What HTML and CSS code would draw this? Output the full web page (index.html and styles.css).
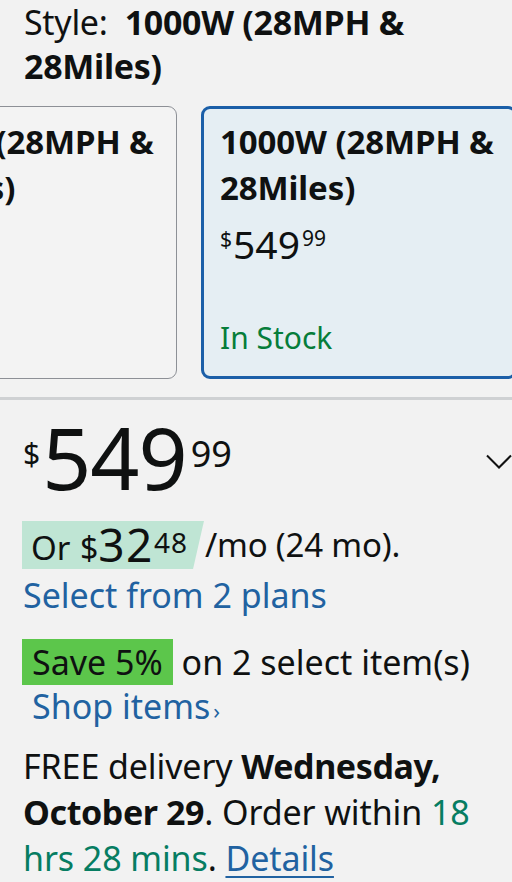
FILE: index.html
```html
<!DOCTYPE html>
<html>
<head>
<meta charset="utf-8">
<link rel="stylesheet" href="styles.css">
</head>
<body>
<div class="page">
  <div class="style-label">Style:&nbsp; <b>1000W (28MPH &amp; 28Miles)</b></div>

  <div class="cards">
    <div class="card">
      <div class="card-title">1000W (28MPH &amp; 28Miles)</div>
      <div class="card-price"><span class="cs">$</span>549<span class="cc">99</span></div>
      <div class="card-stock">In Stock</div>
    </div>
    <div class="card selected">
      <div class="card-title">1000W (28MPH &amp; 28Miles)</div>
      <div class="card-price"><span class="cs">$</span>549<span class="cc">99</span></div>
      <div class="card-stock">In Stock</div>
    </div>
  </div>

  <div class="divider"></div>

  <div class="buybox">
    <div class="price-row">
      <div class="price"><span class="ps">$</span><span class="pw">549</span><span class="pc">99</span></div>
      <svg class="chev" width="26" height="16" viewBox="0 0 26 16"><path d="M1 1.5 L13 13.5 L25 1.5" fill="none" stroke="#111" stroke-width="2"/></svg>
    </div>

    <div class="mo-row"><span class="mo-hl">Or <span class="ms">$</span><span class="mw">32</span><span class="mc">48</span></span><span class="mo-rest">/mo (24 mo).</span></div>
    <div class="link plans">Select from 2 plans</div>

    <div class="save-row"><span class="save">Save 5%</span> on 2 select item(s)</div>
    <div class="link shop">Shop items<span class="arr">›</span></div>

    <div class="delivery">FREE delivery <b>Wednesday, October 29</b>. Order within <span class="green">18 hrs 28 mins</span>. <span class="details">Details</span></div>
  </div>
</div>
</body>
</html>
```

FILE: styles.css
```css
html, body {
  margin: 0;
  padding: 0;
  background: #f2f2f2;
}
body {
  font-family: "Noto Sans", "Open Sans", sans-serif;
  color: #0f1111;
  width: 512px;
  height: 882px;
  overflow: hidden;
}
.style-label {
  font-size: 34px;
  line-height: 44px;
  padding: 0 24px;
  letter-spacing: -0.3px;
}
.style-label b {
  font-weight: 700;
}
.cards {
  display: flex;
  gap: 24px;
  margin-top: 18px;
  margin-left: -139px;
  height: 273px;
}
.card {
  flex: 0 0 316px;
  box-sizing: border-box;
  height: 273px;
  border: 1px solid #8d9096;
  border-radius: 9px;
  padding: 12px 18px 0 18px;
  display: flex;
  flex-direction: column;
  background: #f3f3f3;
}
.card.selected {
  border: 3px solid #1b5fa8;
  background: #e5eef3;
  padding: 10px 16px 0 16px;
}
.card-title {
  font-size: 33px;
  font-weight: 700;
  line-height: 46px;
  letter-spacing: -0.1px;
}
.card-price {
  font-size: 39px;
  line-height: 46px;
  margin-top: 4px;
}
.cs {
  font-size: 21px;
  vertical-align: 12px;
  margin-right: 1px;
}
.cc {
  font-size: 21px;
  vertical-align: 13px;
  margin-left: 2px;
}
.card-stock {
  margin-top: auto;
  margin-bottom: 18px;
  font-size: 30px;
  line-height: 40px;
  color: #067d3a;
}
.divider {
  height: 3px;
  background: #cfd1d3;
  margin-top: 18px;
}
.buybox {
  padding: 0 22px 0 23px;
}
.price-row {
  display: flex;
  justify-content: space-between;
  align-items: flex-start;
  margin-top: 14px;
  height: 96px;
}
.price {
  line-height: 1;
  display: flex;
  align-items: flex-start;
}
.ps {
  font-size: 30px;
  margin-top: 25px;
  margin-right: 2px;
}
.pw {
  font-size: 86px;
  line-height: 86px;
  letter-spacing: -1px;
}
.pc {
  font-size: 36px;
  margin-top: 22px;
  margin-left: 4px;
}
.chev {
  margin-top: 40px;
  margin-right: -22px;
}
.mo-row {
  font-size: 33px;
  line-height: 42px;
  margin-top: 11px;
  display: flex;
  align-items: center;
}
.mo-hl {
  display: inline-block;
  background: #bfe5d4;
  padding: 0 16px 0 9px;
  margin-left: -1px;
  clip-path: polygon(0 0, 100% 0, 94% 100%, 0 100%);
  line-height: 42px;
  white-space: nowrap;
}
.ms {
  font-size: 32px;
  margin-left: 1px;
}
.mw {
  font-size: 46px;
  letter-spacing: 1.5px;
  vertical-align: -2px;
}
.mc {
  font-size: 28px;
  letter-spacing: 1px;
  vertical-align: 7px;
}
.mo-rest {
  margin-left: 1px;
  letter-spacing: -0.2px;
}
.link {
  color: #2162a1;
}
.plans {
  font-size: 34px;
  line-height: 44px;
  margin-top: 4px;
}
.save-row {
  font-size: 34px;
  line-height: 46px;
  margin-top: 22px;
}
.save {
  display: inline-block;
  background: #5cc64b;
  padding: 0 10px 0 10px;
  margin-left: -1px;
}
.shop {
  font-size: 34px;
  line-height: 42px;
  padding-left: 9px;
}
.arr {
  font-size: 22px;
  margin-left: 3px;
}
.delivery {
  font-size: 34px;
  line-height: 46px;
  margin-top: 12px;
  letter-spacing: -0.1px;
}
.delivery b {
  font-weight: 700;
  letter-spacing: -0.4px;
}
.green {
  color: #067d62;
}
.details {
  color: #2162a1;
  text-decoration: underline;
  text-decoration-thickness: 2px;
  text-underline-offset: 5px;
}
```
